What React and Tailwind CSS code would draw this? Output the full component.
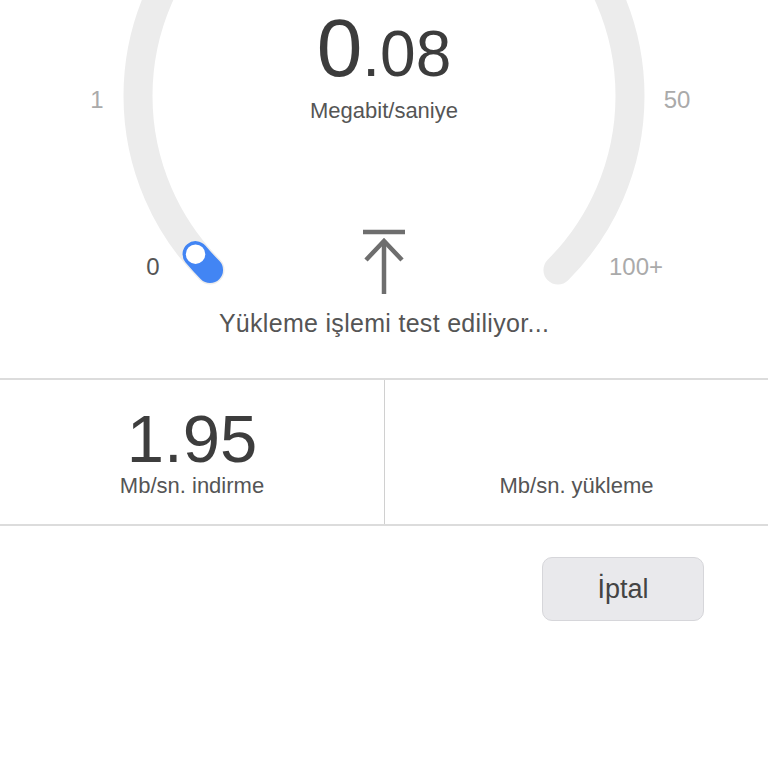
import React from 'react';

// gauge geometry (center sits above the fold, top of the dial is cut off)
const CX = 384;
const CY = 96;
const R = 246;

const point = (deg) => {
  const a = (deg * Math.PI) / 180;
  return [CX + R * Math.cos(a), CY + R * Math.sin(a)];
};

const Gauge = ({ value = 140 }) => {
  const [sx, sy] = point(135);
  const [ex, ey] = point(45);
  const [kx, ky] = point(value);
  return (
    <svg className="absolute inset-0" width="768" height="378" viewBox="0 0 768 378">
      <path
        d={`M ${sx} ${sy} A ${R} ${R} 0 1 1 ${ex} ${ey}`}
        fill="none"
        stroke="#ececec"
        strokeWidth="29"
        strokeLinecap="round"
      />
      <path
        d={`M ${sx} ${sy} A ${R} ${R} 0 0 1 ${kx} ${ky}`}
        fill="none"
        stroke="#4285f4"
        strokeWidth="26"
        strokeLinecap="round"
      />
      <circle cx={kx} cy={ky} r="11" fill="#fff" stroke="#4285f4" strokeWidth="2.5" />
    </svg>
  );
};

const UploadArrow = () => (
  <svg width="48" height="66" viewBox="0 0 48 66" fill="none" stroke="#6e6e6e" strokeWidth="4.5">
    <line x1="3" y1="4" x2="45" y2="4" />
    <line x1="24" y1="14" x2="24" y2="66" />
    <polyline points="6,32 24,13 42,32" strokeLinejoin="miter" />
  </svg>
);

const App = () => {
  return (
    <div className="w-full min-h-screen bg-white font-['Liberation_Sans',Arial,sans-serif]">
      {/* Speed dial */}
      <div className="relative h-[380px] overflow-hidden border-b-2 border-[#dcdcdc]">
        <Gauge />

        <span className="absolute left-[97px] top-[88px] -translate-x-1/2 text-[24px] leading-none text-[#aaaaaa]">1</span>
        <span className="absolute left-[677px] top-[88px] -translate-x-1/2 text-[24px] leading-none text-[#aaaaaa]">50</span>
        <span className="absolute left-[153px] top-[255px] -translate-x-1/2 text-[24px] leading-none text-[#555555]">0</span>
        <span className="absolute left-[636px] top-[255px] -translate-x-1/2 text-[24px] leading-none text-[#aaaaaa]">100+</span>

        <div className="relative flex flex-col items-center pt-[7px]">
          <div className="flex items-baseline leading-none text-[#3c3c3c]">
            <span className="text-[82px]">0</span>
            <span className="text-[64px]">.08</span>
          </div>
          <div className="mt-[11px] text-[22px] leading-none text-[#555555]">Megabit/saniye</div>
          <div className="mt-[106px]">
            <UploadArrow />
          </div>
          <div className="mt-[17px] text-[25px] leading-none tracking-[0.3px] text-[#555555]">
            Yükleme işlemi test ediliyor...
          </div>
        </div>
      </div>

      {/* Results */}
      <div className="grid grid-cols-2 h-[146px] border-b-2 border-[#dcdcdc]">
        <div className="flex flex-col items-center pt-[29px]">
          <div className="h-[66px] text-[67px] leading-[60px] text-[#3d3d3d]">1.95</div>
          <div className="text-[22px] leading-none text-[#555555]">Mb/sn. indirme</div>
        </div>
        <div className="flex flex-col items-center pt-[29px] border-l border-[#d0d0d0]">
          <div className="h-[66px]" />
          <div className="text-[22px] leading-none text-[#555555]">Mb/sn. yükleme</div>
        </div>
      </div>

      {/* Actions */}
      <div className="flex justify-end pr-[64px] pt-[31px]">
        <button className="w-[162px] h-[64px] rounded-[10px] bg-[#e9e9ec] border border-[#d6d6da] text-[27px] text-[#444444]">
          İptal
        </button>
      </div>
    </div>
  );
};

export default App;
